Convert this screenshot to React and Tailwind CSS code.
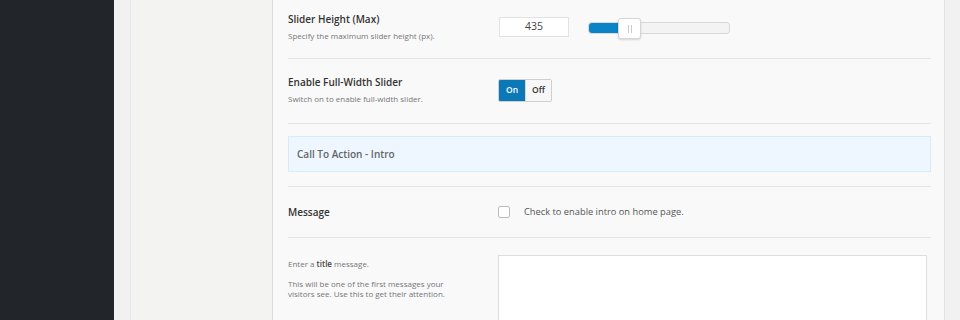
import React, { useState } from 'react';

const font = { fontFamily: '"Open Sans", "Liberation Sans", sans-serif' };

const Label = ({ title, desc }) => (
    <div className="w-[210px] shrink-0">
        <div className="text-[10px] font-semibold text-[#333] leading-[16px]">{title}</div>
        {desc && <div className="mt-[3px] text-[8px] text-[#777] leading-[12px]">{desc}</div>}
    </div>
);

const App = () => {
    const [fullWidth, setFullWidth] = useState(true);
    const [intro, setIntro] = useState(false);

    return (
        <div className="flex w-[960px] h-[320px] overflow-hidden" style={font}>
            {/* admin menu */}
            <div className="w-[114px] shrink-0 bg-[#22262b]" />
            <div className="w-[16px] shrink-0 bg-[#f1f1f1]" />

            {/* options nav column */}
            <div className="w-[143px] shrink-0 bg-[#f3f3f1] border-l border-[#e6e6e6] border-r border-r-[#dcdcdc]" />

            {/* options panel */}
            <div className="w-[672px] shrink-0 bg-[#f9f9f9] border-r border-[#e2e2e2] pl-[15px] pr-[13px]">
                {/* slider height */}
                <div className="h-[59px] pt-[11px] flex border-b border-[#e4e4e4]">
                    <Label title="Slider Height (Max)" desc="Specify the maximum slider height (px)." />
                    <div className="flex items-start pt-[6px]">
                        <div className="ml-px w-[70px] h-[20px] bg-white border border-[#e2e2e2] flex items-center justify-center text-[10.5px] text-[#444]">
                            435
                        </div>
                        <div className="relative ml-[19px] mt-[5px] w-[142px] h-[12px] rounded-[3px] border border-[#d8d8d8] bg-[#f3f3f3]">
                            <div className="absolute left-0 top-0 h-full w-[34px] rounded-l-[3px] bg-[#0a84c6]" />
                            <div className="absolute left-[29px] top-[-5px] w-[23px] h-[21px] rounded-[3px] bg-white border border-[#d6d6d6] shadow-[0_1px_2px_rgba(0,0,0,0.15)] flex items-center justify-center gap-[2px]">
                                <span className="w-px h-[8px] bg-[#ccc]" />
                                <span className="w-px h-[8px] bg-[#ccc]" />
                            </div>
                        </div>
                    </div>
                </div>

                {/* full width */}
                <div className="h-[65px] pt-[15px] flex border-b border-[#e4e4e4]">
                    <Label title="Enable Full-Width Slider" desc="Switch on to enable full-width slider." />
                    <div className="pt-[5px]">
                        <div className="flex h-[23px] rounded-[2px] overflow-hidden border border-[#cfcfcf]">
                            <button
                                onClick={() => setFullWidth(true)}
                                className={`w-[26px] text-[8.5px] font-semibold ${fullWidth ? 'bg-[#0b78b8] text-white' : 'bg-[#f7f7f7] text-[#333]'}`}
                            >
                                On
                            </button>
                            <button
                                onClick={() => setFullWidth(false)}
                                className={`w-[26px] text-[8.5px] font-semibold border-l border-[#d6d6d6] ${!fullWidth ? 'bg-[#0b78b8] text-white' : 'bg-[#f7f7f7] text-[#333]'}`}
                            >
                                Off
                            </button>
                        </div>
                    </div>
                </div>

                {/* section heading */}
                <div className="pt-[12px] pb-[14px] border-b border-[#e4e4e4]">
                    <div className="h-[36px] bg-[#eef7ff] border border-[#d7ebfb] flex items-center px-[8px] text-[10px] font-semibold text-[#666]">
                        Call To Action - Intro
                    </div>
                </div>

                {/* message */}
                <div className="h-[51px] flex items-center border-b border-[#e4e4e4]">
                    <div className="w-[210px] shrink-0 text-[10px] font-semibold text-[#333]">Message</div>
                    <label className="flex items-center gap-[14px] text-[9.3px] text-[#555] cursor-pointer">
                        <span
                            onClick={() => setIntro(!intro)}
                            className={`w-[12px] h-[12px] rounded-[2px] border border-[#bbb] ${intro ? 'bg-[#0b78b8]' : 'bg-white'}`}
                        />
                        Check to enable intro on home page.
                    </label>
                </div>

                {/* title */}
                <div className="flex pt-[17px]">
                    <div className="w-[210px] shrink-0 pt-[4px] text-[8px] text-[#777] leading-[10px]">
                        <p>
                            Enter a <span className="font-semibold text-[#444]">title</span> message.
                        </p>
                        <p className="mt-[10px] w-[165px]">
                            This will be one of the first messages your visitors see. Use this to get their attention.
                        </p>
                    </div>
                    <div className="w-[429px] h-[80px] bg-white border border-[#dedede]" />
                </div>
            </div>

            <div className="flex-1 bg-[#f1f1f1]" />
        </div>
    );
};

export default App;
